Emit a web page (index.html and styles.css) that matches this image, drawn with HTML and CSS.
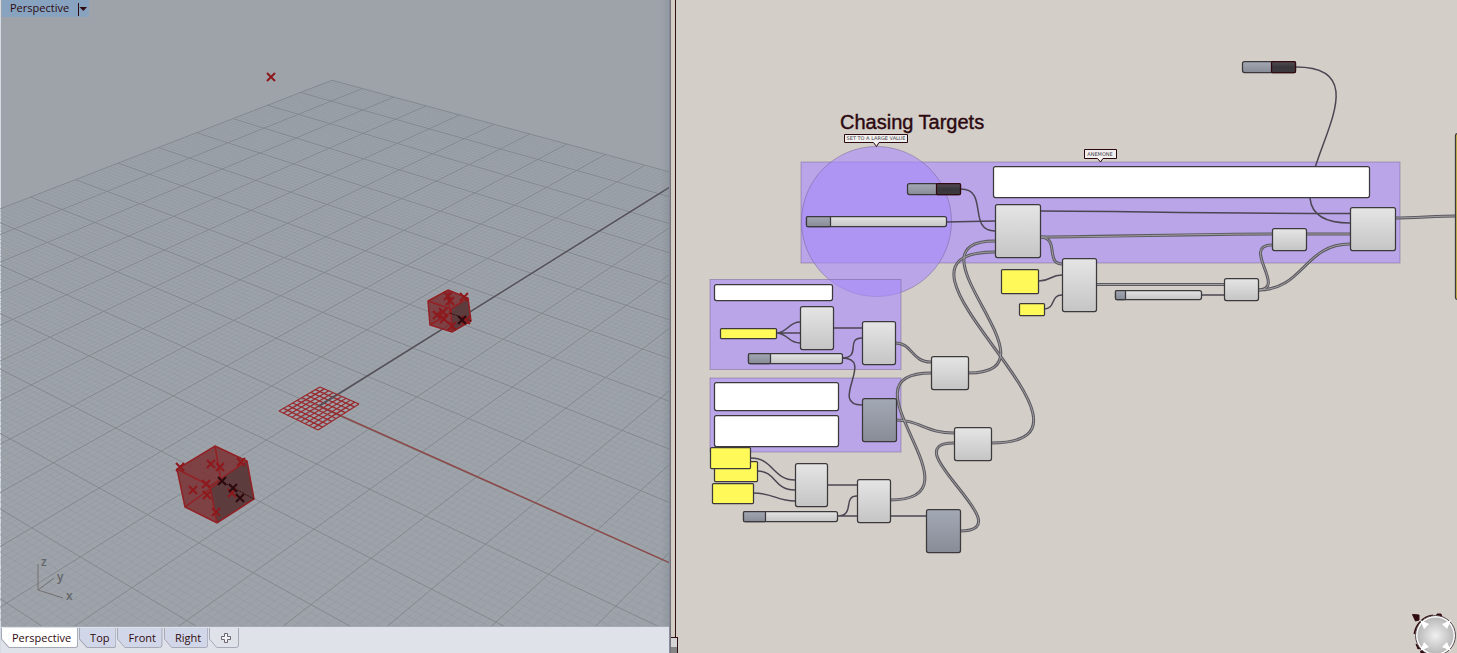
FILE: index.html
```html
<!DOCTYPE html>
<html lang="en">
<head>
<meta charset="utf-8">
<title>Chasing Targets</title>
<link rel="stylesheet" href="styles.css">
</head>
<body>
<main class="app">
  <section class="model">
    <div class="viewport">
      <svg class="scene" aria-hidden="true">
        <g id="minor" class="minor"></g>
        <g id="major" class="major"></g>
        <path class="axis-y" d="M319 406L670 187"/>
        <path class="axis-x" d="M319 406L670 563"/>
        <g id="patch" class="patch"></g>
        <path class="axis-y" d="M319 406L336 395"/>
        <g class="cube">
          <path class="face" d="M215 446L247 461L254 499L217 523L185 507L177 469Z"/>
          <path class="side" d="M210 486L247 461L254 499L217 523Z"/>
          <path class="edge" d="M215 446L247 461L254 499L217 523L185 507L177 469ZM177 469L210 486L247 461M210 486L217 523M215 446L221 481L185 507"/>
          <path class="hidden" d="M221 481L254 499"/>
          <path class="face" d="M448 290L468 298L471 321L452 332L430 325L428 301Z"/>
          <path class="side" d="M451 309L468 298L471 321L452 332Z"/>
          <path class="edge" d="M448 290L468 298L471 321L452 332L430 325L428 301ZM428 301L451 309L468 298M451 309L452 332M448 290L450 313L430 325"/>
          <path class="hidden" d="M450 313L471 321"/>
        </g>
        <g id="points" class="points"></g>
        <g class="gizmo">
          <path d="M38 564V590L54 578M38 590L63 598"/>
          <text x="41" y="566">z</text><text x="57" y="581">y</text><text x="66" y="600">x</text>
        </g>
      </svg>
      <div class="view-title"><span>Perspective</span><button class="view-menu" aria-label="Viewport menu"><svg width="10" height="14" viewBox="0 0 10 14"><path d="M1.500 1V14" /><path class="solid" d="M2.500 5H10L6.300 9Z"/></svg></button></div>
    </div>
    <nav class="tabs">
      <button class="tab active"><svg class="tab-shape" viewBox="0 0 77 20" preserveAspectRatio="none"><path d="M.5 0V11L8 19.500H74Q76.500 19.500 76.500 17V0"/></svg><span>Perspective</span></button>
      <button class="tab"><svg class="tab-shape" viewBox="0 0 37 20" preserveAspectRatio="none"><path d="M.5 0V11L8 19.500H34Q36.500 19.500 36.500 17V0"/></svg><span>Top</span></button>
      <button class="tab"><svg class="tab-shape" viewBox="0 0 46 20" preserveAspectRatio="none"><path d="M.5 0V11L8 19.500H43Q45.500 19.500 45.500 17V0"/></svg><span>Front</span></button>
      <button class="tab"><svg class="tab-shape" viewBox="0 0 46 20" preserveAspectRatio="none"><path d="M.5 0V11L8 19.500H43Q45.500 19.500 45.500 17V0"/></svg><span>Right</span></button>
      <button class="tab add" aria-label="Add viewport"><svg class="tab-shape" viewBox="0 0 31 20" preserveAspectRatio="none"><path d="M.5 0V11L8 19.500H28Q30.500 19.500 30.500 17V0"/></svg><svg class="plus" width="10" height="10" viewBox="0 0 10 10"><path d="M3.500 .5H6.500V3.500H9.500V6.500H6.500V9.500H3.500V6.500H.5V3.500H3.500Z"/></svg></button>
    </nav>
  </section>
  <div class="divider"><span class="grip"></span></div>
  <section class="graph">
    <svg class="board" role="img" aria-label="Chasing Targets definition">
      <defs>
        <linearGradient id="light" x2="0" y2="1"><stop stop-color="#e5e5e5"/><stop offset="1" stop-color="#c5c5c5"/></linearGradient>
        <linearGradient id="slate" x2="0" y2="1"><stop stop-color="#a3a8b5"/><stop offset="1" stop-color="#888c96"/></linearGradient>
        <linearGradient id="ink" x2="0" y2="1"><stop stop-color="#554d54"/><stop offset=".5" stop-color="#39363a"/><stop offset="1" stop-color="#3d3a3d"/></linearGradient>
        <radialGradient id="ball"><stop stop-color="#f0f0f0"/><stop offset="1" stop-color="#b9b9b9"/></radialGradient>
      </defs>
      <g transform="translate(-678 0)">
        <g class="group">
          <rect x="801" y="162" width="599" height="101"/>
          <circle cx="876.500" cy="221.500" r="75"/>
          <rect x="710" y="279.500" width="191" height="90"/>
          <rect x="710" y="378" width="191" height="74"/>
        </g>
        <g class="wire">
          <path d="M961 189C989 189 967 231 995 231"/>
          <path d="M946 222C970 222 970 221 995 221"/>
          <path d="M1296 67C1408 67 1238 223 1350 223"/>
          <path d="M776 333C788 333 788 322 800 322M776 333H800M776 333C788 333 788 343 800 343"/>
          <path d="M833 328H862M842 358C862 358 845 338 862 338M842 358C876 358 828 405 862 405"/>
          <path d="M827 485H857M837 516C856 516 842 496 857 496M837 516H927"/>
          <path d="M751 458C773 458 773 480 795 480M757 471C777 471 773 490 795 490M753 493C773 493 777 501 795 501"/>
          <path d="M1039 281C1051 281 1050 275 1062 275M1044 309C1056 309 1050 295 1062 295M1201 295H1224"/>
          <path d="M1040 211C1120 211 1200 213.500 1350 213.500"/>
        </g>
        <g id="doubles">
          <path d="M1040 237C1110 237 1190 234 1272 234"/>
          <path d="M1306 234H1350"/>
          <path d="M1040 237C1060 237 1045 264 1062 264"/>
          <path d="M1096 284.500H1224"/>
          <path d="M1258 290C1288 290 1240 245 1272 245"/>
          <path d="M1258 290C1304 290 1304 244 1350 244"/>
          <path d="M1395 218C1415 218 1436 216 1457 216"/>
          <path d="M895 343C913 343 911 362 931 362"/>
          <path d="M968 373C1068 373 898 241 995 241"/>
          <path d="M991 443C1136 443 853 252 995 252"/>
          <path d="M890 500C990 500 833 373 931 373"/>
          <path d="M895 420C920 420 925 433 954 433"/>
          <path d="M960 531C1026 531 890 443 954 443"/>
        </g>
        <g class="node light">
          <rect x="995" y="204" width="45" height="53" rx="2"/><rect x="1062" y="258" width="34" height="53" rx="2"/>
          <rect x="1350" y="207" width="45" height="43" rx="2"/><rect x="1272" y="228" width="34" height="22" rx="2"/>
          <rect x="1224" y="278" width="34" height="22" rx="2"/><rect x="800" y="306" width="33" height="43" rx="2"/>
          <rect x="862" y="321" width="33" height="43" rx="2"/><rect x="931" y="356" width="37" height="33" rx="2"/>
          <rect x="954" y="427" width="37" height="33" rx="2"/><rect x="795" y="463" width="32" height="43" rx="2"/>
          <rect x="857" y="479" width="33" height="43" rx="2"/>
        </g>
        <g class="node slate"><rect x="862" y="398" width="34" height="43" rx="2"/><rect x="926" y="509" width="34" height="43" rx="2"/></g>
        <g class="node slider">
          <rect x="806" y="216" width="140" height="10" rx="2"/><rect class="name" x="806" y="216" width="24" height="10" rx="1"/>
          <rect x="748" y="353" width="94" height="10" rx="2"/><rect class="name" x="748" y="353" width="22" height="10" rx="1"/>
          <rect x="743" y="511" width="94" height="10" rx="2"/><rect class="name" x="743" y="511" width="22" height="10" rx="1"/>
          <rect x="1115" y="290" width="86" height="9" rx="2"/><rect class="name" x="1115" y="290" width="10" height="9" rx="1"/>
        </g>
        <g class="node toggle">
          <rect class="name" x="907" y="183" width="53" height="11" rx="2"/><rect class="state" x="936" y="183" width="24" height="11" rx="1"/>
          <rect class="name" x="1242" y="61" width="53" height="11" rx="2"/><rect class="state" x="1271" y="61" width="24" height="11" rx="1"/>
        </g>
        <g class="node yellow">
          <rect x="720" y="328" width="56" height="10" rx="1"/><rect x="1001" y="269" width="37" height="24" rx="1"/>
          <rect x="1019" y="303" width="25" height="12" rx="1"/><rect x="714" y="461" width="43" height="20" rx="1"/>
          <rect x="710" y="447" width="40" height="21" rx="1"/><rect x="712" y="483" width="41" height="20" rx="1"/>
          <rect class="ochre" x="1455" y="133" width="20" height="166" rx="2"/>
        </g>
        <g class="node note">
          <rect x="993" y="166" width="376" height="31" rx="2"/><rect x="714" y="284" width="118" height="16" rx="2"/>
          <rect x="714" y="382" width="124" height="28" rx="2"/><rect x="714" y="415" width="124" height="31" rx="2"/>
        </g>
        <text class="title" x="840" y="129">Chasing Targets</text>
        <g class="tag">
          <path d="M844.500 134.500H907.500V142.500H879L876.500 146.500L873.500 142.500H844.500Z"/><text x="876" y="140">SET TO A LARGE VALUE</text>
          <path d="M1084.500 149.500H1116.500V158.500H1103L1100.500 162L1097.500 158.500H1084.500Z"/><text x="1100" y="156">ANEMONE</text>
        </g>
        <g class="compass">
          <path class="ring" d="M1415 634A21 21 0 0 1 1433 616"/>
          <path class="mark" d="M1412.500 614.500L1419 615V620L1415.500 621ZM1436 618L1437 614L1441 614L1442 618ZM1416 644L1420 648L1418 649ZM1420 648L1425 653H1421Z"/>
          <circle cx="1435.500" cy="635.500" r="20" class="rim"/>
          <circle cx="1435.500" cy="635.500" r="18" class="ball"/>
          <path class="arrow" d="M1420 620L1429 624L1424 629ZM1451 620L1442 624L1447 629ZM1420 651L1424 642L1429 647ZM1451 651L1447 642L1442 647Z"/>
        </g>
      </g>
    </svg>
  </section>
</main>
<script src="scene.js"></script>
</body>
</html>
```
FILE: styles.css
```css
* { box-sizing: border-box; }
body { margin: 0; font-family: "Open Sans", "Noto Sans", sans-serif; font-size: 11px; color: #300a10; }
button { font: inherit; color: inherit; background: none; border: 0; padding: 0; }
.app { display: flex; height: 100vh; overflow: hidden; background: #d3cec7; }
.model { flex: 668 1 0; min-width: 0; display: flex; flex-direction: column; border-left: 1px solid #d5dbe5; background: #e0e2ea; }
.viewport { position: relative; flex: 1; min-height: 0; background: #9ea3aa; border-bottom: 1px solid #a4a9b4; }
.viewport::after { content: ""; position: absolute; inset: 0 0 0 auto; width: 8px; background: linear-gradient(90deg, rgba(110, 120, 130, 0), rgba(110, 120, 130, .25)); }
.scene, .board { display: block; width: 100%; height: 100%; }
.scene { position: absolute; left: -1px; top: 0; width: calc(100% + 1px); }
.scene path { fill: none; }
.minor path { stroke: #8f959d; stroke-width: 1; opacity: .42; }
.major path { stroke: #80868b; stroke-width: 1; opacity: .9; }
.scene .axis-y { stroke: #56525a; stroke-width: 1.5; }
.scene .axis-x { stroke: #8c4a49; stroke-width: 1.5; }
.patch path { stroke: #99292d; stroke-width: 1.25; }
.scene .face { fill: #7c383c; fill-opacity: .92; }
.scene .side { fill: #5d3c3d; }
.scene .edge { stroke: #932024; stroke-width: 1.5; }
.scene .hidden { stroke: #310a0c; stroke-dasharray: 2 1; }
.points path { stroke: #8e191d; stroke-width: 2; }
.points .dark { stroke: #2c090c; }
.gizmo path { stroke: #74706f; stroke-width: 1; }
.gizmo text { font-size: 12px; font-weight: 600; fill: #65666a; }
.view-title { position: absolute; left: 1px; top: 0; display: flex; align-items: center; height: 17px; padding-left: 8px; gap: 8px; width: 87px; background: #87a3bf; }
.view-title span { height: 17px; line-height: 15px; }
.view-menu { display: flex; }
.view-menu path { stroke: #300a10; fill: none; }
.view-menu .solid { fill: #300a10; stroke: none; }
.tabs { display: flex; gap: 1px; height: 26px; padding-top: 1px; }
.tab { position: relative; display: flex; justify-content: center; height: 20px; padding: 0 7px 0 11px; line-height: 20px; }
.tab-shape { position: absolute; inset: 0; width: 100%; height: 100%; }
.tab-shape path { fill: #d1d7e8; stroke: #a4a8b5; }
.active .tab-shape path { fill: #fff; }
.add .tab-shape path { fill: #e0e2ea; }
.tab span { position: relative; }
.add { width: 30px; align-items: center; padding: 0 0 0 4px; }
.plus { position: relative; fill: #f2f2f6; stroke: #6a6670; }
.divider { flex: 0 0 8px; display: flex; align-items: flex-end; background: linear-gradient(90deg, #858c98 0 1px, #776f80 1px 2px, #d3cec4 2px 6px, #301014 6px 7px, #d3cec7 7px); }
.grip { width: 7px; height: 16px; margin-left: 2px; border: 1px solid #301014; border-bottom: 0; border-left: 0; background: linear-gradient(#d5d5d5 0 9px, #858585 9px); }
.graph { flex: 780 1 0; min-width: 0; }
.group rect, .group circle { fill: rgba(169, 138, 251, .6); stroke: #6d5c8f; stroke-opacity: .45; }
.wire path { fill: none; stroke: #4c4653; stroke-width: 1.5; }
.double { fill: none; stroke: #5c5a61; stroke-width: 3; }
.double-core { fill: none; stroke: #a19fa2; stroke-width: 1; }
.node { transform: translate(.5px, .5px); }
.node rect { stroke: #3c393c; stroke-width: 1.25; }
.light rect, .slider rect { fill: url(#light); }
.slate rect, .node .name { fill: url(#slate); }
.node .state { fill: url(#ink); stroke: #300a10; }
.yellow rect { fill: #fffa5a; }
.node .ochre { fill: #cdb94c; }
.note rect { fill: #fff; }
.title { font: 20px "Liberation Sans", Arial, sans-serif; fill: #2c0810; stroke: #2c0810; stroke-width: .4; }
.tag path { fill: #f2f0ee; stroke: #2c0810; }
.tag text { font: 5px "DejaVu Sans", sans-serif; fill: #45404a; text-anchor: middle; }
.ring { fill: none; stroke: #300a10; stroke-width: 3; }
.mark { fill: #300a10; stroke: #300a10; }
.rim { fill: #fafafa; stroke: #55484c; }
.ball { fill: url(#ball); }
.arrow { fill: #fff; }
```
FILE: scene.js
```js
const NS = 'http://www.w3.org/2000/svg';
function line(parent, d, cls) {
  const p = document.createElementNS(NS, 'path');
  p.setAttribute('d', d);
  if (cls) p.setAttribute('class', cls);
  parent.appendChild(p);
}
// Perspective projection of the construction plane, in major cells from the far corner.
function project(i, j) {
  const w = 1 - 0.01558 * i - 0.02318 * j;
  return ((332 + 24.72 * i - 38.39 * j) / w).toFixed(2) + ' ' +
         ((80.3 + 6.867 * i + 10.03 * j) / w).toFixed(2);
}
const minor = document.getElementById('minor');
const major = document.getElementById('major');
const divisions = 10;
for (let n = 0; n <= 20 * divisions; n++) {
  const k = n / divisions;
  const target = n % divisions ? minor : major;
  line(target, 'M' + project(k, 0) + 'L' + project(k, 20));
  line(target, 'M' + project(0, k) + 'L' + project(20, k));
}
const mix = (a, b, t) => [a[0] + (b[0] - a[0]) * t, a[1] + (b[1] - a[1]) * t];
const corners = [[279, 411], [320, 387], [359, 404], [318, 430]];
const patch = document.getElementById('patch');
for (let n = 0; n <= 9; n++) {
  const t = n / 9;
  line(patch, 'M' + mix(corners[0], corners[1], t) + 'L' + mix(corners[3], corners[2], t));
  line(patch, 'M' + mix(corners[0], corners[3], t) + 'L' + mix(corners[1], corners[2], t));
}
const points = document.getElementById('points');
const cross = (x, y, cls) => line(points, `M${x - 4} ${y - 4}l8 8m0-8l-8 8`, cls);
[[271, 77], [180, 467], [211, 464], [220, 467], [241, 462], [206, 484], [193, 490], [207, 495], [232, 493], [216, 512],
 [448, 296], [464, 297], [450, 301], [437, 315], [443, 312], [444, 319], [452, 326], [466, 320]].forEach(p => cross(...p));
[[222, 481], [233, 488], [240, 498], [462, 320]].forEach(p => cross(p[0], p[1], 'dark'));
const doubles = document.getElementById('doubles');
[...doubles.children].forEach(p => {
  p.setAttribute('class', 'double');
  line(doubles, p.getAttribute('d'), 'double-core');
});
```
